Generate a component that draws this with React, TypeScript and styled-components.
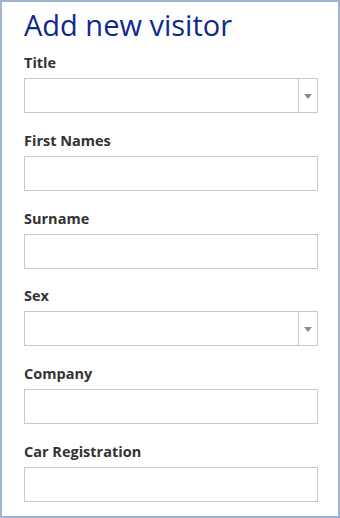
import styled, { createGlobalStyle } from "styled-components";

const GlobalStyle = createGlobalStyle`
  html, body {
    margin: 0;
    padding: 0;
    background: #ffffff;
  }
  * {
    box-sizing: border-box;
  }
`;

const fields: { label: string; kind: "select" | "text" }[] = [
  { label: "Title", kind: "select" },
  { label: "First Names", kind: "text" },
  { label: "Surname", kind: "text" },
  { label: "Sex", kind: "select" },
  { label: "Company", kind: "text" },
  { label: "Car Registration", kind: "text" },
];

const App = () => {
  return (
    <>
      <GlobalStyle />
      <Frame>
        <Heading>Add new visitor</Heading>
        <Form>
          {fields.map((field) => (
            <Field key={field.label}>
              <Label>{field.label}</Label>
              {field.kind === "select" ? (
                <SelectBox>
                  <SelectValue />
                  <SelectArrow>
                    <svg width="8" height="5" viewBox="0 0 8 5">
                      <path d="M0 0 H8 L4 5 Z" fill="#8a8a8a" />
                    </svg>
                  </SelectArrow>
                </SelectBox>
              ) : (
                <TextInput type="text" />
              )}
            </Field>
          ))}
        </Form>
      </Frame>
    </>
  );
};

const Frame = styled.div`
  width: 340px;
  height: 518px;
  border: 2px solid #a2b2d6;
  padding: 5px 20px 0 22px;
  font-family: "Open Sans", "Liberation Sans", sans-serif;
  overflow: hidden;
`;

const Heading = styled.h1`
  margin: 0;
  font-size: 29px;
  line-height: 36px;
  font-weight: 400;
  color: #0e2a8c;
`;

const Form = styled.div`
  display: flex;
  flex-direction: column;
  gap: 17.8px;
  margin-top: 10px;
`;

const Field = styled.div`
  display: flex;
  flex-direction: column;
  gap: 5px;
`;

const Label = styled.label`
  font-size: 14.5px;
  line-height: 20px;
  font-weight: 700;
  color: #333333;
`;

const TextInput = styled.input`
  width: 294px;
  height: 35px;
  border: 1px solid #c9c9c9;
  border-radius: 0;
  padding: 0 8px;
  font: inherit;
  outline: none;
`;

const SelectBox = styled.div`
  width: 294px;
  height: 35px;
  border: 1px solid #c9c9c9;
  display: flex;
`;

const SelectValue = styled.div`
  flex: 1;
`;

const SelectArrow = styled.div`
  width: 19px;
  border-left: 1px solid #c9c9c9;
  display: flex;
  align-items: center;
  justify-content: center;
  padding-top: 1px;
`;

export default App;
